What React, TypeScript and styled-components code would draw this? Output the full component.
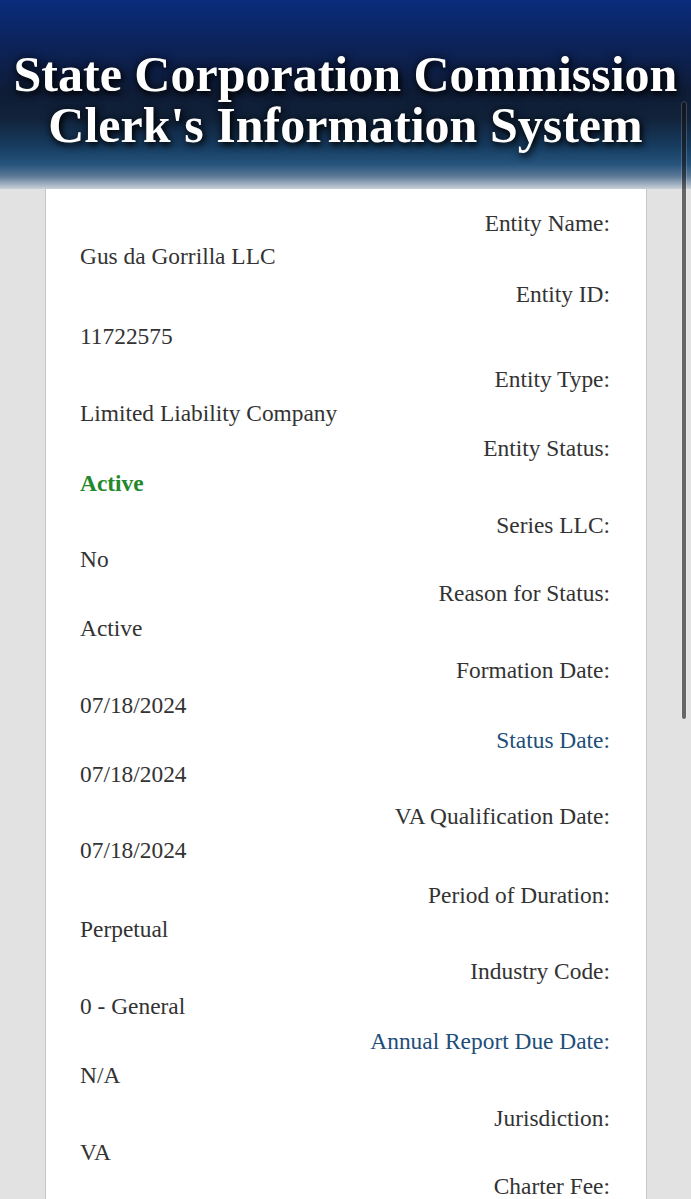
import React from "react";
import styled, { createGlobalStyle, css } from "styled-components";

const GlobalStyle = createGlobalStyle`
  html, body {
    margin: 0;
    padding: 0;
    height: 100%;
    overflow: hidden;
    background: #e2e2e2;
  }
  #root {
    min-height: 100%;
  }
`;

const Page = styled.div`
  position: relative;
  width: 691px;
  height: 1199px;
  overflow: hidden;
  background: #e2e2e2;
  font-family: "Liberation Serif", "Times New Roman", serif;
`;

const Banner = styled.header`
  height: 189px;
  box-sizing: border-box;
  padding-top: 49px;
  background: linear-gradient(
    to bottom,
    #0a2c7c 0px,
    #0c245e 40px,
    #0f1c36 92px,
    #11223a 118px,
    #173c60 146px,
    #24537c 164px,
    #5a7896 176px,
    #9eaebf 184px,
    #c9d0d8 189px
  );
  text-align: center;
`;

const BannerTitle = styled.h1`
  margin: 0;
  font-family: "Liberation Serif", "Times New Roman", serif;
  font-weight: bold;
  font-size: 50px;
  line-height: 51px;
  color: #ffffff;
  text-shadow: 2px 3px 6px rgba(0, 0, 0, 0.9), 0 0 10px rgba(0, 0, 0, 0.6);
  white-space: nowrap;
`;

const Card = styled.section`
  width: 602px;
  box-sizing: border-box;
  margin-left: 45px;
  background: #ffffff;
  border-left: 1px solid #c6c6c6;
  border-right: 1px solid #c6c6c6;
  padding: 17px 36px 40px 34px;
  min-height: 1100px;
`;

const FieldList = styled.dl`
  margin: 0;
  display: flex;
  flex-direction: column;
`;

const Label = styled.dt<{ $gap: number; $tone?: "link" }>`
  margin: ${(p) => p.$gap}px 0 0 0;
  text-align: right;
  font-size: 23.4px;
  line-height: 34px;
  color: ${(p) => (p.$tone === "link" ? "#1d4e7a" : "#333333")};
`;

const Value = styled.dd<{ $gap: number; $tone?: "active" }>`
  margin: ${(p) => p.$gap}px 0 0 0;
  text-align: left;
  font-size: 23.4px;
  line-height: 34px;
  color: #333333;
  ${(p) =>
    p.$tone === "active" &&
    css`
      color: #23882a;
      font-weight: bold;
    `}
`;

const ScrollThumb = styled.div`
  position: absolute;
  right: 5px;
  top: 102px;
  width: 4px;
  height: 617px;
  border-radius: 2px;
  background: rgba(20, 20, 20, 0.6);
  box-shadow: 0 0 0 0.5px rgba(255, 255, 255, 0.35);
`;

type Field = {
  label: string;
  value?: string;
  labelGap: number;
  valueGap: number;
  labelTone?: "link";
  valueTone?: "active";
};

const fields: Field[] = [
  { label: "Entity Name:", value: "Gus da Gorrilla LLC", labelGap: 0, valueGap: -1 },
  { label: "Entity ID:", value: "11722575", labelGap: 4, valueGap: 8 },
  { label: "Entity Type:", value: "Limited Liability Company", labelGap: 9, valueGap: 0 },
  { label: "Entity Status:", value: "Active", labelGap: 1, valueGap: 1, valueTone: "active" },
  { label: "Series LLC:", value: "No", labelGap: 8, valueGap: 0 },
  { label: "Reason for Status:", value: "Active", labelGap: 0, valueGap: 1 },
  { label: "Formation Date:", value: "07/18/2024", labelGap: 8, valueGap: 1 },
  { label: "Status Date:", value: "07/18/2024", labelGap: 1, valueGap: 0, labelTone: "link" },
  { label: "VA Qualification Date:", value: "07/18/2024", labelGap: 8, valueGap: 0 },
  { label: "Period of Duration:", value: "Perpetual", labelGap: 11, valueGap: 0 },
  { label: "Industry Code:", value: "0 - General", labelGap: 8, valueGap: 1 },
  { label: "Annual Report Due Date:", value: "N/A", labelGap: 1, valueGap: 0, labelTone: "link" },
  { label: "Jurisdiction:", value: "VA", labelGap: 9, valueGap: 0 },
  { label: "Charter Fee:", labelGap: 0, valueGap: 0 },
];

export default function App() {
  return (
    <Page>
      <GlobalStyle />
      <Banner>
        <BannerTitle>
          State Corporation Commission
          <br />
          Clerk's Information System
        </BannerTitle>
      </Banner>
      <Card>
        <FieldList>
          {fields.map((f) => (
            <React.Fragment key={f.label}>
              <Label $gap={f.labelGap} $tone={f.labelTone}>
                {f.label}
              </Label>
              {f.value !== undefined && (
                <Value $gap={f.valueGap} $tone={f.valueTone}>
                  {f.value}
                </Value>
              )}
            </React.Fragment>
          ))}
        </FieldList>
      </Card>
      <ScrollThumb />
    </Page>
  );
}
